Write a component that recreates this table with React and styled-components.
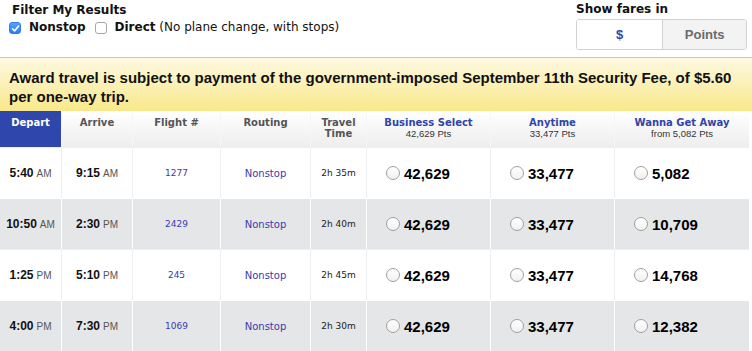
import React from 'react';
import styled, { createGlobalStyle } from 'styled-components';

const GlobalStyle = createGlobalStyle`
  body {
    margin: 0;
    background: #fff;
    font-family: 'Liberation Sans', Arial, sans-serif;
  }
`;

const verdana = `'DejaVu Sans', Verdana, sans-serif`;
const arial = `'Liberation Sans', Arial, sans-serif`;
const COLS = '61px 70px 87px 89px 55px 123px 123px 134px';

const Page = styled.div`
  width: 752px;
  height: 351px;
  overflow: hidden;
`;

const TopBar = styled.div`
  display: flex;
  justify-content: space-between;
  height: 58px;
  box-sizing: border-box;
  border-bottom: 1px solid #c8c8c8;
`;

const Filters = styled.div`
  padding: 3px 0 0 9px;
`;

const Label = styled.div`
  font-family: ${verdana};
  font-weight: bold;
  font-size: 12px;
  line-height: 14px;
  color: #111;
  margin-left: ${({ $indent }) => $indent || 0}px;
`;

const CheckRow = styled.div`
  display: flex;
  align-items: center;
  margin-top: 3px;
  font-family: ${verdana};
  font-size: 12px;
  line-height: 14px;
  color: #111;
`;

const Box = styled.span`
  display: inline-flex;
  align-items: center;
  justify-content: center;
  width: 12px;
  height: 12px;
  margin-top: 2px;
  margin-right: 8px;
  border-radius: 3px;
  box-sizing: border-box;
  background: ${({ $checked }) => ($checked ? 'linear-gradient(#57a2f8, #2e7cf0)' : '#fff')};
  border: 1px solid ${({ $checked }) => ($checked ? '#2f7fee' : '#a8a8a8')};
`;

const Bold = styled.b`
  margin-right: ${({ $gap }) => $gap || 0}px;
`;

const FareSwitch = styled.div`
  padding: 2px 5px 0 0;
  width: 171px;
`;

const Toggle = styled.div`
  display: flex;
  margin-top: 3px;
  height: 31px;
  box-sizing: border-box;
  border: 1px solid #d2d2d2;
  border-radius: 3px;
  overflow: hidden;
`;

const ToggleOption = styled.div`
  flex: ${({ $grow }) => $grow};
  display: flex;
  align-items: center;
  justify-content: center;
  font-family: ${arial};
  font-weight: bold;
  font-size: 13px;
  background: ${({ $active }) => ($active ? '#fff' : '#f3f3f3')};
  color: ${({ $active }) => ($active ? '#3344aa' : '#6a6a6a')};
  border-left: ${({ $first }) => ($first ? 'none' : '1px solid #d2d2d2')};
`;

const Banner = styled.div`
  height: 53px;
  box-sizing: border-box;
  padding: 10px 9px 0;
  background: linear-gradient(#fdf9e2, #f9e88a);
  font-family: ${arial};
  font-weight: bold;
  font-size: 15px;
  line-height: 19px;
  color: #111;
`;

const Table = styled.div`
  width: 749px;
`;

const HeadRow = styled.div`
  display: grid;
  grid-template-columns: ${COLS};
  column-gap: 1px;
  height: 36px;
  background: #f6f6f6;
`;

const HeadCell = styled.div`
  padding-top: 6px;
  box-sizing: border-box;
  text-align: center;
  font-family: ${verdana};
  font-weight: bold;
  font-size: 10px;
  line-height: 11px;
  color: ${({ $blue, $active }) => ($active ? '#fff' : $blue ? '#2f45a8' : '#555')};
  background: ${({ $active }) => ($active ? '#2f47ad' : 'linear-gradient(#fff, #efeded)')};
`;

const SubPts = styled.div`
  font-family: ${arial};
  font-weight: normal;
  font-size: 9.5px;
  line-height: 11px;
  color: #333;
`;

const Row = styled.div`
  display: grid;
  grid-template-columns: ${COLS};
  column-gap: 1px;
  height: 51px;
  box-sizing: border-box;
  border-top: 1px solid ${({ $line }) => $line};
  background: ${({ $line }) => $line};
`;

const Cell = styled.div`
  display: flex;
  align-items: center;
  justify-content: ${({ $left }) => ($left ? 'flex-start' : 'center')};
  padding-left: ${({ $left }) => ($left ? '19px' : '0')};
  background: ${({ $fill }) => $fill};
`;

const Time = styled.span`
  font-family: ${arial};
  font-weight: bold;
  font-size: 12px;
  color: #111;
`;

const Meridiem = styled.span`
  font-family: ${arial};
  font-size: 10px;
  color: #555;
  margin-left: 3px;
`;

const Link = styled.span`
  font-family: ${verdana};
  font-size: ${({ $size }) => $size}px;
  color: #3a3aae;
`;

const Duration = styled.span`
  font-family: ${verdana};
  font-size: 9px;
  color: #222;
`;

const Radio = styled.span`
  width: 14px;
  height: 14px;
  box-sizing: border-box;
  border-radius: 50%;
  border: 1px solid #a0a0a0;
  background: linear-gradient(#fff, #f1f1f1);
  margin-right: 4px;
`;

const Amount = styled.span`
  font-family: ${arial};
  font-weight: bold;
  font-size: 15px;
  color: #000;
`;

const fareHeads = [
  ['Business Select', '42,629 Pts'],
  ['Anytime', '33,477 Pts'],
  ['Wanna Get Away', 'from 5,082 Pts'],
];

const flights = [
  { dep: ['5:40', 'AM'], arr: ['9:15', 'AM'], num: '1277', time: '2h 35m', fares: ['42,629', '33,477', '5,082'] },
  { dep: ['10:50', 'AM'], arr: ['2:30', 'PM'], num: '2429', time: '2h 40m', fares: ['42,629', '33,477', '10,709'] },
  { dep: ['1:25', 'PM'], arr: ['5:10', 'PM'], num: '245', time: '2h 45m', fares: ['42,629', '33,477', '14,768'] },
  { dep: ['4:00', 'PM'], arr: ['7:30', 'PM'], num: '1069', time: '2h 30m', fares: ['42,629', '33,477', '12,382'] },
];

const Check = () => (
  <svg width="9" height="9" viewBox="0 0 9 9">
    <path d="M1.5 4.8 L3.6 6.9 L7.6 2" fill="none" stroke="#fff" strokeWidth="1.6" strokeLinecap="round" strokeLinejoin="round" />
  </svg>
);

const App = () => {
  return (
    <Page>
      <GlobalStyle />
      <TopBar>
        <Filters>
          <Label $indent={3}>Filter My Results</Label>
          <CheckRow>
            <Box $checked>
              <Check />
            </Box>
            <Bold $gap={9}>Nonstop</Bold>
            <Box />
            <Bold>Direct</Bold>&nbsp;(No plane change, with stops)
          </CheckRow>
        </Filters>
        <FareSwitch>
          <Label>Show fares in</Label>
          <Toggle>
            <ToggleOption $first $active $grow={87}>$</ToggleOption>
            <ToggleOption $grow={84}>Points</ToggleOption>
          </Toggle>
        </FareSwitch>
      </TopBar>
      <Banner>
        Award travel is subject to payment of the government-imposed September 11th Security Fee, of $5.60 per
        one-way trip.
      </Banner>
      <Table>
        <HeadRow>
          <HeadCell $active>Depart</HeadCell>
          <HeadCell>Arrive</HeadCell>
          <HeadCell>Flight #</HeadCell>
          <HeadCell>Routing</HeadCell>
          <HeadCell>
            Travel
            <br />
            Time
          </HeadCell>
          {fareHeads.map(([name, pts]) => (
            <HeadCell $blue key={name}>
              {name}
              <SubPts>{pts}</SubPts>
            </HeadCell>
          ))}
        </HeadRow>
        {flights.map((f, i) => {
          const fill = i % 2 ? '#e5e6e8' : '#fff';
          const line = i % 2 ? '#fff' : '#efefef';
          return (
            <Row key={f.num} $line={line}>
              <Cell $fill={fill}>
                <Time>{f.dep[0]}</Time>
                <Meridiem>{f.dep[1]}</Meridiem>
              </Cell>
              <Cell $fill={fill}>
                <Time>{f.arr[0]}</Time>
                <Meridiem>{f.arr[1]}</Meridiem>
              </Cell>
              <Cell $fill={fill}>
                <Link $size={9}>{f.num}</Link>
              </Cell>
              <Cell $fill={fill}>
                <Link $size={10}>Nonstop</Link>
              </Cell>
              <Cell $fill={fill}>
                <Duration>{f.time}</Duration>
              </Cell>
              {f.fares.map((amt, j) => (
                <Cell $fill={fill} $left key={j}>
                  <Radio />
                  <Amount>{amt}</Amount>
                </Cell>
              ))}
            </Row>
          );
        })}
      </Table>
    </Page>
  );
};

export default App;
